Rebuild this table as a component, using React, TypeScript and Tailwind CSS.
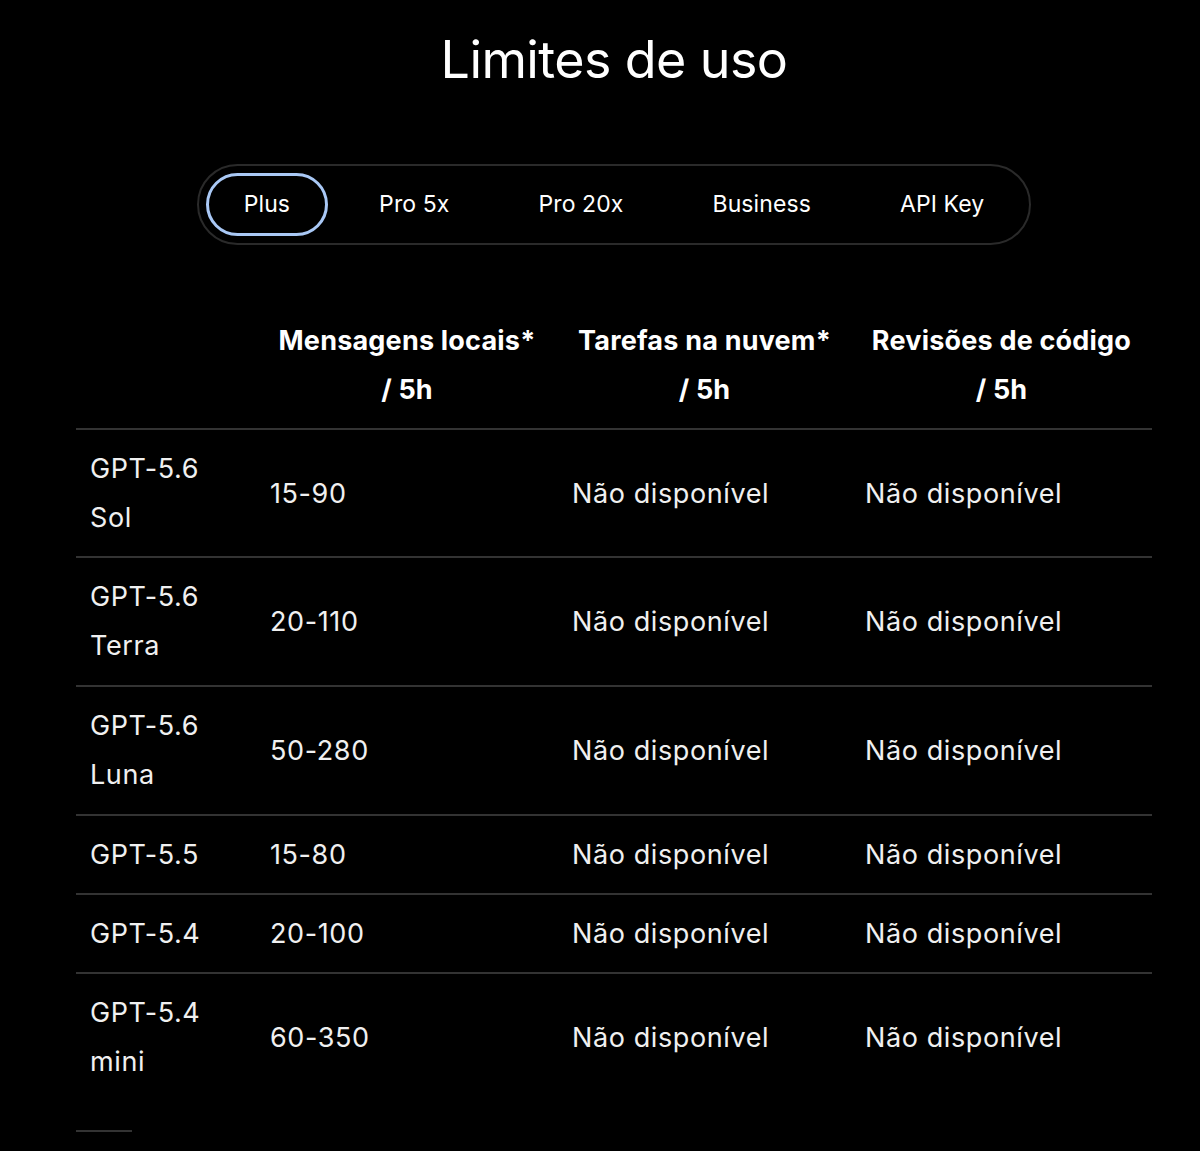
import React from "react";

const tabs = ["Plus", "Pro 5x", "Pro 20x", "Business", "API Key"];

const rows: { model: string[]; local: string }[] = [
  { model: ["GPT-5.6", "Sol"], local: "15-90" },
  { model: ["GPT-5.6", "Terra"], local: "20-110" },
  { model: ["GPT-5.6", "Luna"], local: "50-280" },
  { model: ["GPT-5.5"], local: "15-80" },
  { model: ["GPT-5.4"], local: "20-100" },
  { model: ["GPT-5.4", "mini"], local: "60-350" },
];

export default function App() {
  return (
    <div
      className="min-h-[1151px] w-[1200px] bg-black text-white"
      style={{ fontFamily: "Inter, 'Noto Sans', sans-serif" }}
    >
      <div className="ml-[76px] w-[1076px] pt-[26px]">
        <h1 className="text-center text-[52px] leading-[68px] font-normal tracking-[-0.6px] text-white">
          Limites de uso
        </h1>

        <div className="mt-[70px] flex justify-center">
          <div className="flex items-center gap-[13px] rounded-full border-2 border-[#2a2a2a] p-[7px]">
            {tabs.map((t, i) => (
              <div
                key={t}
                className={
                  i === 0
                    ? "flex h-[63px] items-center rounded-full border-[3px] border-[#a9c8f5] px-[35px] text-[23px] tracking-[0.1px] text-white"
                    : "flex h-[63px] items-center rounded-full border-[3px] border-transparent px-[35px] text-[23px] tracking-[0.1px] text-white"
                }
              >
                {t}
              </div>
            ))}
          </div>
        </div>

        <div className="mt-[57px]">
          <div className="grid grid-cols-[180px_302px_293px_301px] border-b-2 border-[#333333] py-[14px] text-[27px] leading-[49px] font-bold tracking-[0.2px]">
            <div />
            <div className="text-center">
              Mensagens locais*
              <br />/ 5h
            </div>
            <div className="text-center">
              Tarefas na nuvem*
              <br />/ 5h
            </div>
            <div className="text-center">
              Revisões de código
              <br />/ 5h
            </div>
          </div>
          {rows.map((r, i) => (
            <div
              key={i}
              className={
                i === rows.length - 1
                  ? "grid grid-cols-[180px_302px_293px_301px] items-center py-[14px] text-[27px] leading-[49px] tracking-[0.6px] text-[#f0f0f0]"
                  : i === 1 || i === 2
                  ? "grid grid-cols-[180px_302px_293px_301px] items-center border-b-2 border-[#333333] pt-[14px] pb-[15px] text-[27px] leading-[49px] tracking-[0.6px] text-[#f0f0f0]"
                  : "grid grid-cols-[180px_302px_293px_301px] items-center border-b-2 border-[#333333] py-[14px] text-[27px] leading-[49px] tracking-[0.6px] text-[#f0f0f0]"
              }
            >
              <div className="pl-[14px]">
                {r.model.map((m, j) => (
                  <div key={j}>{m}</div>
                ))}
              </div>
              <div className="pl-[14px]">{r.local}</div>
              <div className="pl-[14px]">Não disponível</div>
              <div className="pl-[14px]">Não disponível</div>
            </div>
          ))}
          <div className="mt-[30px] h-[2px] w-[56px] bg-[#333333]" />
        </div>
      </div>
    </div>
  );
}
